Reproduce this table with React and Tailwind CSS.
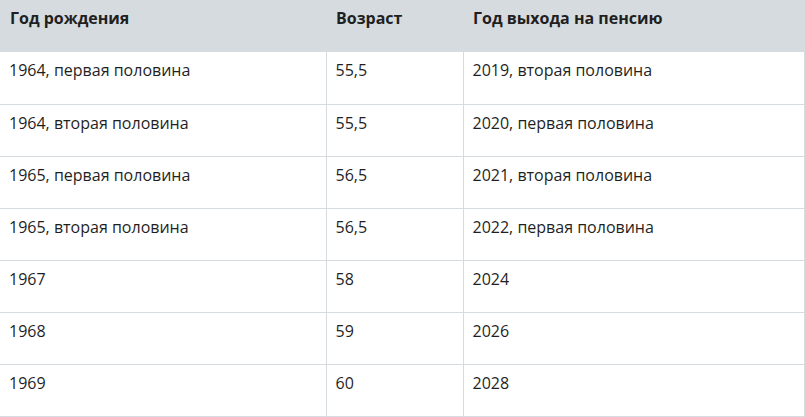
const rows = [
  ["1964, первая половина", "55,5", "2019, вторая половина"],
  ["1964, вторая половина", "55,5", "2020, первая половина"],
  ["1965, первая половина", "56,5", "2021, вторая половина"],
  ["1965, вторая половина", "56,5", "2022, первая половина"],
  ["1967", "58", "2024"],
  ["1968", "59", "2026"],
  ["1969", "60", "2028"],
];

export default function App() {
  return (
    <div className="w-[805px] h-[417px] bg-white text-[#1f1f1f] font-['Open_Sans',sans-serif] text-[16px] leading-[22px]">
      <table className="w-[805px] border-collapse table-fixed">
        <colgroup>
          <col className="w-[326px]" />
          <col className="w-[137px]" />
          <col />
        </colgroup>
        <thead>
          <tr className="bg-[#d6dbdf] h-[52px]">
            <th className="text-left align-top font-bold px-[10px] pt-[7px]">Год рождения</th>
            <th className="text-left align-top font-bold px-[10px] pt-[7px]">Возраст</th>
            <th className="text-left align-top font-bold px-[10px] pt-[7px] border-r border-[#d6dbdf]">Год выхода на пенсию</th>
          </tr>
        </thead>
        <tbody>
          {rows.map((r, i) => (
            <tr key={i} className="h-[52px]">
              <td className="align-top px-[9px] pt-[7px] border-b border-r border-[#d6dbe0]">{r[0]}</td>
              <td className="align-top px-[9px] pt-[7px] border-b border-r border-[#d6dbe0]">{r[1]}</td>
              <td className="align-top px-[9px] pt-[7px] border-b border-r border-[#d6dbe0]">{r[2]}</td>
            </tr>
          ))}
        </tbody>
      </table>
    </div>
  );
}
